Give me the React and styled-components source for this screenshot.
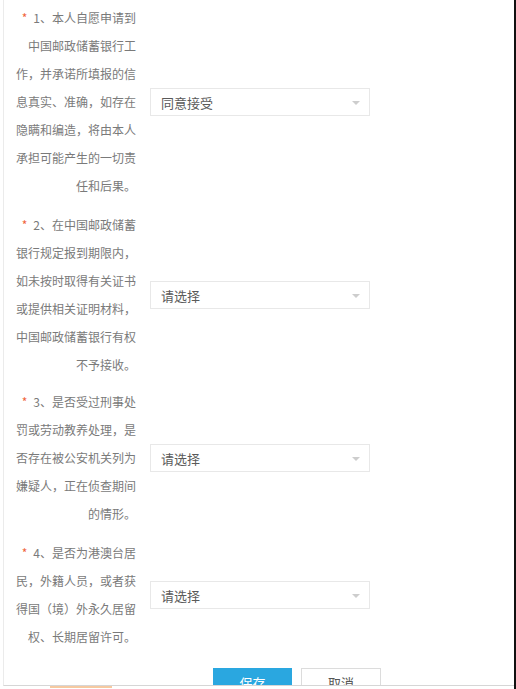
import React from "react";
import styled, { createGlobalStyle } from "styled-components";

const GlobalStyle = createGlobalStyle`
  html, body {
    margin: 0;
    padding: 0;
    background: #fff;
  }
  body {
    font-family: "Noto Sans CJK SC", "Noto Sans", sans-serif;
  }
`;

const questions = [
  {
    lines: [
      "1、本人自愿申请到",
      "中国邮政储蓄银行工",
      "作，并承诺所填报的信",
      "息真实、准确，如存在",
      "隐瞒和编造，将由本人",
      "承担可能产生的一切责",
      "任和后果。",
    ],
    value: "同意接受",
    top: 0,
  },
  {
    lines: [
      "2、在中国邮政储蓄",
      "银行规定报到期限内，",
      "如未按时取得有关证书",
      "或提供相关证明材料，",
      "中国邮政储蓄银行有权",
      "不予接收。",
    ],
    value: "请选择",
    top: 11,
  },
  {
    lines: [
      "3、是否受过刑事处",
      "罚或劳动教养处理，是",
      "否存在被公安机关列为",
      "嫌疑人，正在侦查期间",
      "的情形。",
    ],
    value: "请选择",
    top: 9,
  },
  {
    lines: [
      "4、是否为港澳台居",
      "民，外籍人员，或者获",
      "得国（境）外永久居留",
      "权、长期居留许可。",
    ],
    value: "请选择",
    top: 11,
  },
];

const Page = styled.div`
  width: 516px;
  height: 689px;
  box-sizing: border-box;
  border-right: 2px solid #111;
  overflow: hidden;
  background: #fff;
`;

const Sheet = styled.div`
  height: 686px;
  box-sizing: border-box;
  margin-left: 3px;
  border-left: 1px solid #ebebeb;
  border-bottom: 1px solid #d6d6d6;
  overflow: hidden;
`;

const Form = styled.div`
  display: flex;
  flex-direction: column;
  padding: 4px 0 0 12px;
`;

const Row = styled.div`
  display: grid;
  grid-template-columns: 120px 220px;
  column-gap: 14px;
  align-items: center;
  margin-top: ${(p) => p.$top}px;
`;

const Label = styled.div`
  text-align: right;
  font-size: 12px;
  line-height: 28px;
  color: #7a7a7a;
  white-space: nowrap;
`;

const Star = styled.span`
  color: #f0643c;
  font-size: 12px;
  margin-right: 6px;
`;

const Select = styled.div`
  position: relative;
  height: 28px;
  box-sizing: border-box;
  border: 1px solid #e8e8e8;
  background: #fff;
  padding-left: 10px;
  display: flex;
  align-items: center;
  font-size: 13px;
  color: #5a5a5a;
`;

const Caret = styled.span`
  position: absolute;
  right: 9px;
  top: 12px;
  width: 0;
  height: 0;
  border-left: 4px solid transparent;
  border-right: 4px solid transparent;
  border-top: 4px solid #cdcdcd;
`;

const Buttons = styled.div`
  display: flex;
  gap: 9px;
  margin: 17px 0 0 209px;
`;

const Button = styled.button`
  width: ${(p) => (p.$primary ? "79px" : "80px")};
  height: 30px;
  box-sizing: border-box;
  border: 1px solid ${(p) => (p.$primary ? "#2aa7e0" : "#dcdcdc")};
  background: ${(p) => (p.$primary ? "#2aa7e0" : "#fff")};
  color: ${(p) => (p.$primary ? "#fff" : "#555")};
  font-family: "Noto Sans CJK SC", sans-serif;
  font-size: 13px;
  padding: 0;
  line-height: 28px;
`;

const Tail = styled.div`
  height: 2px;
  padding-left: 50px;
`;

const TailChip = styled.div`
  width: 62px;
  height: 2px;
  background: #f6c9a0;
`;

export default function App() {
  return (
    <>
      <GlobalStyle />
      <Page>
        <Sheet>
          <Form>
            {questions.map((q, i) => (
              <Row key={i} $top={q.top}>
                <Label>
                  {q.lines.map((line, j) => (
                    <div key={j}>
                      {j === 0 && <Star>*</Star>}
                      {line}
                    </div>
                  ))}
                </Label>
                <Select>
                  {q.value}
                  <Caret />
                </Select>
              </Row>
            ))}
          </Form>
          <Buttons>
            <Button $primary>保存</Button>
            <Button>取消</Button>
          </Buttons>
        </Sheet>
        <Tail>
          <TailChip />
        </Tail>
      </Page>
    </>
  );
}
